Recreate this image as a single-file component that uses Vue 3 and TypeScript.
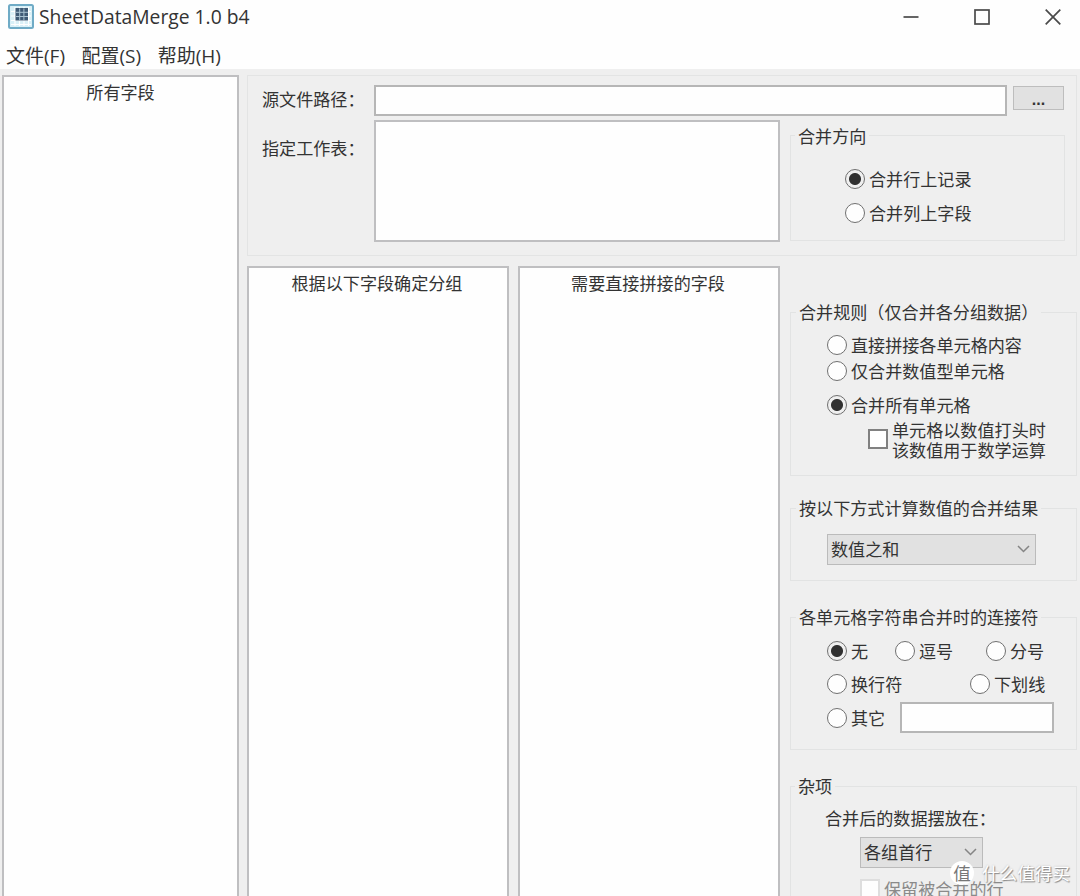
<script setup lang="ts">
import { ref } from 'vue'

interface Option {
  id: string
  label: string
}

const menus: Option[] = [
  { id: 'file', label: '文件(F)' },
  { id: 'config', label: '配置(S)' },
  { id: 'help', label: '帮助(H)' },
]

const directions: Option[] = [
  { id: 'rows', label: '合并行上记录' },
  { id: 'cols', label: '合并列上字段' },
]

const rules: Option[] = [
  { id: 'concat', label: '直接拼接各单元格内容' },
  { id: 'numeric', label: '仅合并数值型单元格' },
  { id: 'all', label: '合并所有单元格' },
]

const separators: Option[] = [
  { id: 'none', label: '无' },
  { id: 'comma', label: '逗号' },
  { id: 'semicolon', label: '分号' },
  { id: 'newline', label: '换行符' },
  { id: 'underscore', label: '下划线' },
  { id: 'other', label: '其它' },
]

const direction = ref('rows')
const rule = ref('all')
const separator = ref('none')
const sourcePath = ref('')
const otherSeparator = ref('')
</script>

<template>
  <div class="window">
    <header class="titlebar">
      <svg class="app-icon" width="26" height="25" viewBox="0 0 26 25">
        <rect x="1" y="1" width="24" height="23" rx="1.5" fill="#d9f0f7" stroke="#6fabc6" stroke-width="2" />
        <path d="M3 7.5h20M3 12h20M3 16.500h20M3 20.500h20M7 3v19M11.500 3v19M16 3v19M20.500 3v19" stroke="#fff" stroke-width="1.200" />
        <rect x="7.500" y="4" width="12.500" height="12.500" fill="#3f5b76" />
        <path d="M8 8.300h12M8 12.500h12M11.700 4.500v12M15.900 4.500v12" stroke="#a9c3d2" stroke-width="1" />
      </svg>
      <h1 class="title">SheetDataMerge 1.0 b4</h1>
      <div class="controls">
        <svg width="16" height="16" viewBox="0 0 16 16"><path d="M.5 8h15" /></svg>
        <svg width="16" height="16" viewBox="0 0 16 16"><rect x="1" y="1" width="14" height="14" /></svg>
        <svg width="16" height="16" viewBox="0 0 16 16"><path d="M.7.7l14.600 14.600M15.300.7L.7 15.300" /></svg>
      </div>
    </header>

    <nav class="menubar">
      <span v-for="m in menus" :key="m.id">{{ m.label }}</span>
    </nav>

    <main class="body">
      <section class="list all-fields">所有字段</section>

      <div class="content">
        <section class="source">
          <span class="label path-label">源文件路径：</span>
          <div class="path-row">
            <input v-model="sourcePath" class="text-input" type="text" />
            <button class="browse">...</button>
          </div>
          <span class="label sheet-label">指定工作表：</span>
          <div class="sheet-row">
            <div class="sheet-list"></div>
            <div class="group direction">
              <h2>合并方向</h2>
              <label v-for="o in directions" :key="o.id" class="choice" @click="direction = o.id">
                <i class="radio" :class="{ on: direction === o.id }"></i>{{ o.label }}
              </label>
            </div>
          </div>
        </section>

        <div class="lower">
          <section class="list">根据以下字段确定分组</section>
          <section class="list">需要直接拼接的字段</section>

          <aside class="settings">
            <div class="group rules">
              <h2>合并规则（仅合并各分组数据）</h2>
              <label v-for="o in rules" :key="o.id" class="choice" :class="o.id" @click="rule = o.id">
                <i class="radio" :class="{ on: rule === o.id }"></i>{{ o.label }}
              </label>
              <div class="leading-number">
                <i class="checkbox"></i>
                <span>单元格以数值打头时<br />该数值用于数学运算</span>
              </div>
            </div>

            <div class="group calc">
              <h2>按以下方式计算数值的合并结果</h2>
              <div class="select">
                数值之和
                <svg width="13" height="8" viewBox="0 0 13 8"><path d="M1 1l5.500 5.500L12 1" /></svg>
              </div>
            </div>

            <div class="group joiner">
              <h2>各单元格字符串合并时的连接符</h2>
              <div class="joiner-grid">
                <label v-for="o in separators" :key="o.id" class="choice" :class="o.id" @click="separator = o.id">
                  <i class="radio" :class="{ on: separator === o.id }"></i>{{ o.label }}
                </label>
                <input v-model="otherSeparator" class="text-input other-input" type="text" />
              </div>
            </div>

            <div class="group misc">
              <h2>杂项</h2>
              <p>合并后的数据摆放在：</p>
              <div class="select">
                各组首行
                <svg width="13" height="8" viewBox="0 0 13 8"><path d="M1 1l5.500 5.500L12 1" /></svg>
              </div>
              <div class="keep"><i class="checkbox"></i>保留被合并的行</div>
            </div>
          </aside>
        </div>
      </div>
    </main>

    <div class="watermark"><b>值</b><span>什么值得买</span></div>
  </div>
</template>

<style>
body {
  margin: 0;
  overflow: hidden;
}
</style>

<style scoped>
* {
  box-sizing: border-box;
}
.window {
  position: relative;
  display: flex;
  flex-direction: column;
  width: 1080px;
  height: 896px;
  overflow: hidden;
  background: #fefefe;
  color: #333;
  font: 17.1px/20px "Noto Sans CJK SC", "Liberation Sans", sans-serif;
  white-space: nowrap;
}
.titlebar {
  display: flex;
  align-items: center;
  height: 36px;
  padding: 0 19px 2px 8px;
}
.app-icon {
  margin-top: -2px;
}
.title {
  margin: 0 0 0 5px;
  font: 400 19.3px/24px "Open Sans", "Noto Sans", sans-serif;
}
.controls {
  display: flex;
  gap: 55px;
  margin-left: auto;
}
.controls svg {
  fill: none;
  stroke: #4a4a4a;
  stroke-width: 1.7;
}
.menubar {
  display: flex;
  gap: 16.500px;
  height: 33px;
  padding: 10px 6px 0;
  font-family: "Open Sans", "Noto Sans CJK SC", sans-serif;
  font-size: 19px;
}
.body {
  flex: 1;
  display: flex;
  min-height: 0;
  padding: 6px 0 0 2px;
  gap: 8px;
  background: #efefef;
}
.list {
  height: 900px;
  padding: 5px 2px 0 0;
  border: 2px solid #bfbfc1;
  background: #fefefe;
  text-align: center;
}
.all-fields {
  width: 237px;
  flex: none;
  padding-right: 0;
}
.content {
  flex: none;
  width: 833px;
}
.source {
  display: grid;
  grid-template-columns: 111px 1fr;
  grid-template-rows: 31px 122px;
  row-gap: 4px;
  width: 830px;
  height: 181px;
  padding: 9px 11px 0 14px;
  border: 1px solid #e3e4e4;
}
.path-label {
  padding-top: 4px;
}
.sheet-label {
  padding-top: 18px;
}
.path-row {
  display: flex;
  gap: 6px;
  margin-left: 1px;
}
.text-input {
  width: 633px;
  height: 31px;
  padding: 0 5px;
  border: 2px solid #b6b6b6;
  background: #fefefe;
  outline: none;
}
.browse {
  width: 51px;
  height: 24px;
  margin-top: 1px;
  padding: 0;
  border: 1px solid #bdbdbd;
  background: #e1e1e1;
  color: #333;
  font: 700 16px/26px "Liberation Sans", sans-serif;
}
.sheet-row {
  display: flex;
  gap: 10px;
  margin-left: 1px;
}
.sheet-list {
  width: 406px;
  height: 122px;
  border: 2px solid #bfbfc1;
  background: #fefefe;
}
.group {
  border: 1px solid #e2e3e3;
}
.group h2 {
  width: max-content;
  height: 21px;
  margin: -11px 0 0 5px;
  padding: 0 3px;
  background: #efefef;
  font: inherit;
}
.choice {
  display: flex;
  align-items: center;
  gap: 4px;
  height: 20px;
}
.radio {
  position: relative;
  flex: none;
  width: 20px;
  height: 20px;
  border: 1.500px solid #707070;
  border-radius: 50%;
  background: #fefefe;
}
.radio.on {
  background: radial-gradient(circle, #303030 5.500px, #efefef 6.500px);
}
.checkbox {
  flex: none;
  width: 20px;
  height: 20px;
  border: 2px solid #808080;
  background: #fefefe;
}
.direction {
  width: 275px;
  height: 106px;
  margin-top: 15px;
}
.direction h2 {
  height: 22px;
  margin-left: 4px;
  padding-top: 1px;
}
.direction .choice {
  margin: 22px 0 0 54px;
}
.direction .choice + .choice {
  margin-top: 14px;
}
.lower {
  display: grid;
  grid-template-columns: 262px 262px 288px;
  column-gap: 9px;
  margin-top: 10px;
}
.settings {
  margin-left: 1px;
  padding-top: 46px;
}
.rules {
  height: 164px;
}
.rules .choice {
  margin-left: 36px;
}
.rules .concat {
  margin-top: 12px;
}
.rules .numeric {
  margin-top: 6px;
}
.rules .all {
  margin-top: 14px;
}
.leading-number {
  display: flex;
  align-items: center;
  gap: 4px;
  margin: 5px 0 0 77px;
}
.leading-number .checkbox {
  margin-top: -2px;
}
.calc {
  height: 73px;
  margin-top: 32px;
}
.select {
  display: flex;
  align-items: center;
  justify-content: space-between;
  width: 209px;
  height: 31px;
  margin: 15px 0 0 36px;
  padding: 0 5px 1px 3px;
  border: 1.500px solid #bbb;
  background: #e1e1e1;
}
.select svg {
  fill: none;
  stroke: #858585;
  stroke-width: 1.500;
}
.joiner {
  height: 133px;
  margin-top: 36px;
}
.joiner-grid {
  display: grid;
  grid-template-columns: 68px 6px 69px 16px 75px;
  grid-template-rows: 20px 20px 31px;
  row-gap: 12.500px;
  margin: 13px 0 0 36px;
}
.joiner-grid .comma {
  grid-column: 2 / 4;
}
.joiner-grid .semicolon {
  grid-column: 5;
}
.joiner-grid .newline {
  grid-column: 1 / 3;
}
.joiner-grid .underscore {
  grid-column: 4 / 6;
}
.joiner-grid .other {
  grid-column: 1;
  margin-top: 2px;
}
.other-input {
  grid-column: 2 / 6;
  width: 154px;
  margin-left: 5px;
  margin-top: -4px;
}
.misc {
  height: 180px;
  margin-top: 36px;
}
.misc h2 {
  margin-left: 4px;
}
.misc p {
  margin: 11px 0 0 34px;
}
.misc .select {
  width: 123px;
  margin: 9px 0 0 69px;
}
.keep {
  display: flex;
  align-items: center;
  gap: 4px;
  margin: 11px 0 0 69px;
  color: #8a8a8a;
}
.keep .checkbox {
  border-color: #dedede;
}
.watermark {
  position: absolute;
  left: 950px;
  top: 861px;
  display: flex;
  align-items: center;
  gap: 8px;
  color: #fff;
  font-size: 17.600px;
  line-height: 24px;
  text-shadow: 1px 1px 1px #888, 0 0 2px #bbb;
}
.watermark b {
  width: 24px;
  height: 24px;
  border-radius: 50%;
  background: #fff;
  color: #777;
  font-weight: 400;
  text-align: center;
  text-shadow: none;
}
</style>
